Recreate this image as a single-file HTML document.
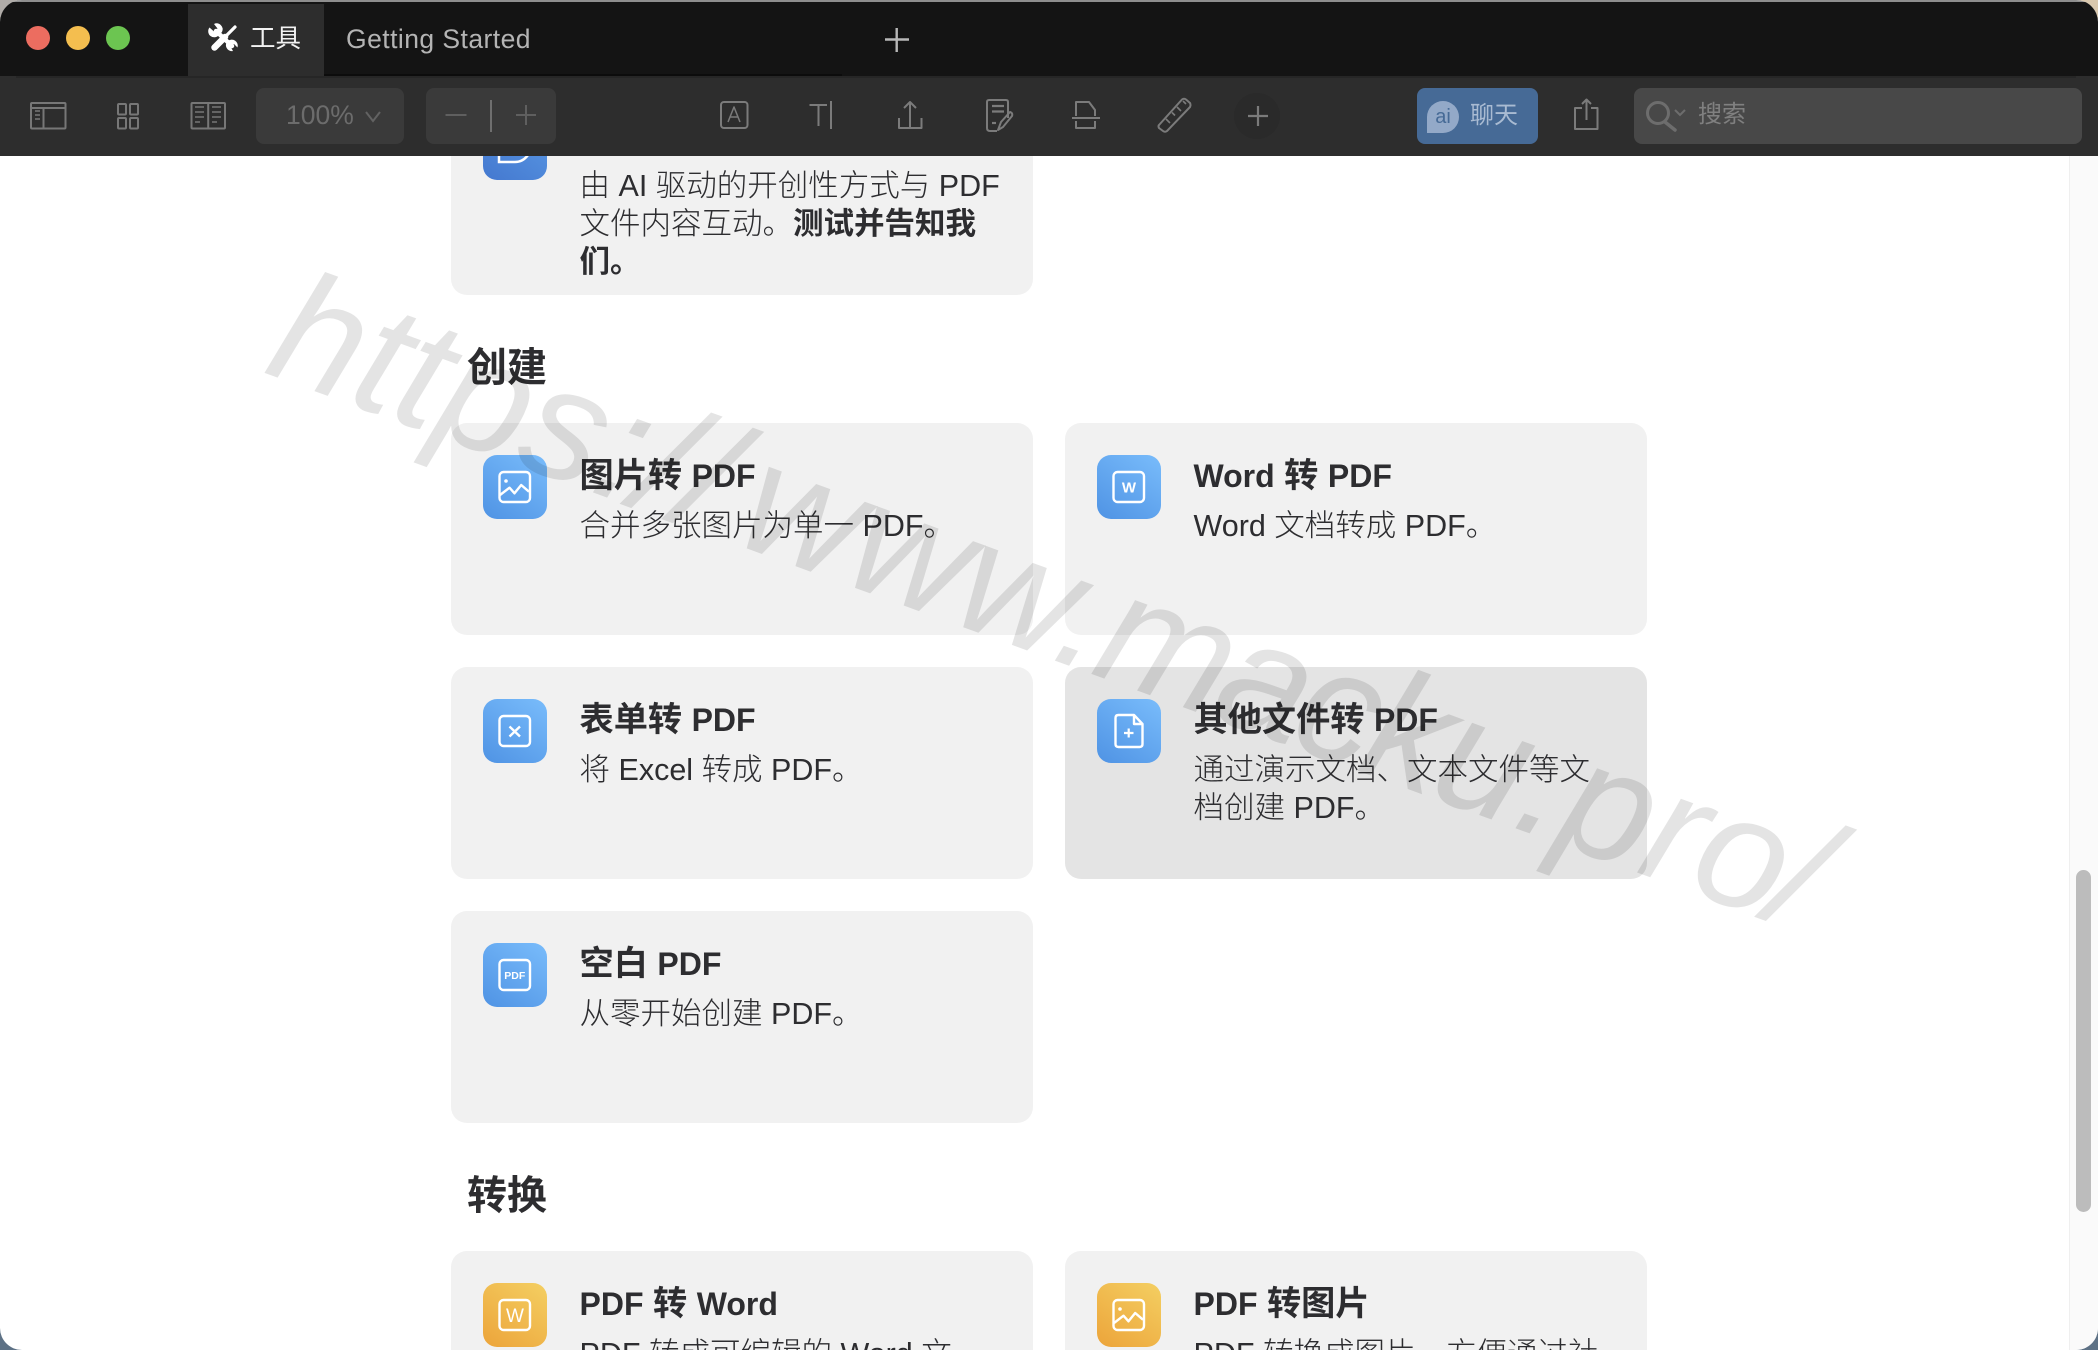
<!DOCTYPE html>
<html lang="zh"><head><meta charset="utf-8"><title>工具</title>
<style>
html,body{margin:0;padding:0;width:2098px;height:1350px;overflow:hidden;background:#8a8a8a}
body{position:relative;font-family:"Liberation Sans","Noto Sans CJK SC",sans-serif;color:#2d2d30}
.corner{position:absolute;width:30px;height:30px}
#win{position:absolute;left:0;top:0;width:2098px;height:1350px;border-radius:22px;overflow:hidden;background:#fff}
.abs{position:absolute}
.title{position:absolute;left:0;top:2px;width:2098px;height:74px;background:#141414}
.bar{position:absolute;left:0;top:76px;width:2098px;height:80px;background:#2d2d2d}
.btn{position:absolute;top:88px;height:56px;border-radius:8px}
.card{position:absolute;width:582px;height:212px;background:#f1f1f1;border-radius:16px;overflow:hidden}
.card.hv{background:#e4e4e4}
.ic{position:absolute;left:32px;top:32px;width:64px;height:64px;border-radius:14px;background:linear-gradient(35deg,#4f93e4,#79bcfb)}
.ic.o{background:linear-gradient(35deg,#eca43a,#f4cf62)}
.ic svg{position:absolute;left:0;top:0}
.t{position:absolute;left:128.5px;top:31.5px;font-size:34.2px;font-weight:700;line-height:42px;white-space:nowrap}
.t span{font-size:32px}
.d{position:absolute;left:128.5px;top:83.5px;width:425px;font-size:30.5px;font-weight:300;line-height:38.4px}
.d b{font-weight:700}
h2{position:absolute;left:467px;margin:0;font-size:40px;font-weight:700;line-height:50px}
</style></head><body>
<div class="corner" style="left:0;top:0;background:#b0aca8"></div>
<div class="corner" style="right:0;top:0;background:#d9c8ae"></div>
<div class="corner" style="left:0;bottom:0;background:#5d7185"></div>
<div class="corner" style="right:0;bottom:0;background:#5d7185"></div>
<div id="win">
<div class="abs" style="left:0;top:0;width:2098px;height:2px;background:#8e8e8e"></div>
<div class="title"></div>
<div class="abs" style="left:324px;top:74px;width:518px;height:2px;background:#0c0c0c"></div>
<div class="bar"></div>
<div class="abs" style="left:16px;top:76px;width:2060px;height:2px;background:#262626"></div>
<div class="abs" style="left:188px;top:4px;width:136px;height:72px;background:#2d2d2d"></div>

<div class="abs" style="left:26px;top:26px;width:24px;height:24px;border-radius:50%;background:#ec6d60"></div>
<div class="abs" style="left:66px;top:26px;width:24px;height:24px;border-radius:50%;background:#f4be4f"></div>
<div class="abs" style="left:106px;top:26px;width:24px;height:24px;border-radius:50%;background:#6cc551"></div>

<div class="abs" style="left:250px;top:20px;font-size:25.5px;line-height:38px;color:#f2f2f2;white-space:nowrap">工具</div>
<div class="abs" style="left:346px;top:20px;font-size:26.5px;letter-spacing:.45px;line-height:38px;color:#b4b4b4;white-space:nowrap">Getting Started</div>

<div class="btn" style="left:256px;width:148px;background:#3a3a3a"></div>
<div class="btn" style="left:426px;width:130px;background:#3a3a3a"></div>
<div class="abs" style="left:286px;top:96px;font-size:26.5px;line-height:38px;color:#6c6c6c;white-space:nowrap">100%</div>
<div class="abs" style="left:1234px;top:93px;width:46px;height:46px;border-radius:50%;background:#2a2a2a"></div>
<div class="btn" style="left:1417px;width:121px;background:#466a96"></div>
<div class="abs" style="left:1470px;top:97px;font-size:24px;line-height:38px;color:#a9bbd2;white-space:nowrap">聊天</div>
<div class="btn" style="left:1634px;width:448px;background:#484848"></div>
<div class="abs" style="left:1698px;top:96px;font-size:24px;line-height:38px;color:#808080;white-space:nowrap">搜索</div>

<svg class="abs" style="left:0;top:0" width="2098" height="156" viewBox="0 0 2098 156" fill="none">
<!-- tools -->
<g stroke="#fff" stroke-linecap="round">
<path d="M214.500 47.500L225 37" stroke-width="6.500"/><path d="M225 37L235 27" stroke-width="3.200"/>
<path d="M216 31L232 46" stroke-width="4.500"/>
</g>
<path d="M209.500 27.500A6 6 0 0 0 219 35L222 32A6 6 0 0 0 214 24L217.500 28.500L214 31.500Z" fill="#fff"/>
<path d="M237.500 47.500A6 6 0 0 0 228 41L226 44A6 6 0 0 0 233 51L230.500 46.500L234 44Z" fill="#fff"/>
<path d="M885 39.500H909M896.700 28V52" stroke="#b8b8b8" stroke-width="2.400"/>
<g stroke="#777" stroke-width="2">
<!-- sidebar -->
<rect x="31" y="103" width="34.500" height="25.500" rx="1"/><path d="M31 108H65.500M43.500 108V128.500"/>
<path d="M35 111H40M35 115H40M35 119H40" stroke-width="1.600"/>
<!-- grid -->
<rect x="118" y="104" width="8" height="10.500" rx="1"/><rect x="130" y="104" width="8" height="10.500" rx="1"/>
<rect x="118" y="118" width="8" height="10.500" rx="1"/><rect x="130" y="118" width="8" height="10.500" rx="1"/>
<!-- book -->
<rect x="191.500" y="103" width="33.500" height="25.500" rx="1"/><path d="M208.200 103V128.500"/>
<path d="M195 107H204M195 112H204M195 117H204M195 122H200M212 107H221M212 112H221M212 117H221M212 122H217" stroke-width="1.600"/>
<!-- chevron -->
<path d="M366 112L373 121L380 112" stroke="#626262"/>
</g>
<g stroke="#5f5f5f" stroke-width="2">
<path d="M445.500 115H466.500"/><path d="M516 115H536M526 105V125"/>
</g>
<path d="M491 100V132" stroke="#6f6f6f" stroke-width="2"/>
<g stroke="#7b7b7b" stroke-width="2" stroke-linejoin="round">
<!-- A box -->
<rect x="721" y="102" width="26.500" height="26" rx="3"/><path d="M728 122L734 107L740 122M730 117H738" stroke-width="1.500"/>
<!-- T| -->
<path d="M809.500 105H827M818.500 105V126M831 101V129"/>
<!-- upload -->
<path d="M899 118V128H921.500V118M910 128V102M904 108L910 102L916 108" />
<!-- doc sign -->
<path d="M1008 118V102Q1008 100 1006 100H989Q987 100 987 102V128Q987 131 990 131H997"/>
<path d="M992 106H1004M992 111.500H1004" stroke-width="2.200"/><path d="M992 123H996" stroke-width="2.200"/>
<path d="M998 130L1001 122L1010 112Q1013 113 1012 116L1003 127Z"/>
<!-- crop -->
<path d="M1076 116V102H1089L1095 110V116M1072 118H1100M1076 121V128H1095V121"/>
<!-- ruler -->
<path d="M1159 125L1182 99.500Q1184 98 1186 99.500L1190 103Q1191 105 1190 107L1167 131Q1165 132.500 1163 131L1159 128Q1158 126 1159 125Z"/>
<path d="M1166 119L1170 123M1172 112.500L1175 115.500M1177 107L1181 111M1183 101L1186 104" stroke-width="1.600"/>
<!-- plus -->
<path d="M1248 116H1268M1258 106V126" stroke-width="2.200"/>
<!-- share -->
<path d="M1582 108H1575V129H1597.500V108H1591M1586.500 120V100M1582 104L1586.500 99.500L1591 104"/>
</g>
<!-- ai bubble -->
<path d="M1427 133V117A16 16 0 1 1 1443 133Z" fill="#93a9c8"/>
<text x="1443" y="123" font-family="Liberation Sans" font-size="20" fill="#466a96" text-anchor="middle">ai</text>
<!-- search -->
<circle cx="1658" cy="113" r="10.500" stroke="#6d6d6d" stroke-width="3"/><path d="M1665 122L1675 130" stroke="#6d6d6d" stroke-width="3.500" stroke-linecap="round"/>
<path d="M1675 110L1680 115L1685 110" stroke="#6d6d6d" stroke-width="2"/>
</svg>

<!-- top partial card -->
<div class="abs" style="left:0;top:156px;width:2098px;height:1194px;overflow:hidden">
<div class="card" style="left:451px;top:-72px;height:211px">
<div class="ic" style="background:linear-gradient(35deg,#4478cf,#5b9be6)">
<svg width="64" height="64" fill="none"><path d="M16 38V46H32Q40 46 45 39" stroke="#fff" stroke-width="2.500"/></svg>
</div>
<div class="d" style="top:82.500px">由 AI 驱动的开创性方式与 PDF 文件内容互动。<b>测试并告知我们。</b></div>
</div>
</div>
<h2 style="top:343px">创建</h2>

<div class="card" style="left:451px;top:423px">
<div class="ic"><svg width="64" height="64" fill="none" stroke="#fff" stroke-width="2.400" stroke-linejoin="round"><rect x="16.500" y="17" width="30.500" height="30" rx="4"/><path d="M17 40L26.500 32.700L31.500 38.300L38.200 30L46 36.700"/><circle cx="23" cy="26" r="1.800" fill="#fff" stroke="none"/></svg></div>
<div class="t">图片转 <span>PDF</span></div><div class="d">合并多张图片为单一 PDF。</div></div>

<div class="card" style="left:1065px;top:423px">
<div class="ic"><svg width="64" height="64" fill="none" stroke="#fff" stroke-width="2.400"><rect x="16.500" y="17" width="30.500" height="30" rx="4"/><text x="32" y="37.500" font-family="Liberation Sans" font-size="15" font-weight="700" fill="#fff" stroke="none" text-anchor="middle">W</text></svg></div>
<div class="t"><span>Word</span> 转 <span>PDF</span></div><div class="d">Word 文档转成 PDF。</div></div>

<div class="card" style="left:451px;top:667px">
<div class="ic"><svg width="64" height="64" fill="none" stroke="#fff" stroke-width="2.400"><rect x="16.500" y="17" width="30.500" height="30" rx="4"/><path d="M26.500 27.500L37 37.500M37 27.500L26.500 37.500"/></svg></div>
<div class="t">表单转 <span>PDF</span></div><div class="d">将 Excel 转成 PDF。</div></div>

<div class="card hv" style="left:1065px;top:667px">
<div class="ic"><svg width="64" height="64" fill="none" stroke="#fff" stroke-width="2.400" stroke-linejoin="round"><path d="M37 16H21.500Q18.500 16 18.500 19V45Q18.500 48 21.500 48H42.500Q45.500 48 45.500 45V25Z"/><path d="M37 16V25H45.500"/><path d="M27 34H36.500M31.700 29.500V38.500" stroke-width="2.200"/></svg></div>
<div class="t">其他文件转 <span>PDF</span></div><div class="d">通过演示文档、文本文件等文档创建 PDF。</div></div>

<div class="card" style="left:451px;top:911px">
<div class="ic"><svg width="64" height="64" fill="none" stroke="#fff" stroke-width="2.400"><rect x="16.500" y="17" width="30.500" height="30" rx="4"/><text x="31.800" y="36" font-family="Liberation Sans" font-size="10.500" font-weight="700" fill="#fff" stroke="none" text-anchor="middle">PDF</text></svg></div>
<div class="t">空白 <span>PDF</span></div><div class="d">从零开始创建 PDF。</div></div>

<h2 style="top:1171px">转换</h2>

<div class="card" style="left:451px;top:1251px">
<div class="ic o"><svg width="64" height="64" fill="none" stroke="#fff" stroke-width="2.400"><rect x="16.500" y="17" width="30.500" height="30" rx="4"/><text x="32" y="39" font-family="Liberation Sans" font-size="19" fill="#fff" stroke="none" text-anchor="middle">W</text></svg></div>
<div class="t"><span>PDF</span> 转 <span>Word</span></div><div class="d">PDF 转成可编辑的 Word 文档。</div></div>

<div class="card" style="left:1065px;top:1251px">
<div class="ic o"><svg width="64" height="64" fill="none" stroke="#fff" stroke-width="2.400" stroke-linejoin="round"><rect x="16.500" y="17" width="30.500" height="30" rx="4"/><path d="M17 40L26.500 32.700L31.500 38.300L38.200 30L46 36.700"/><circle cx="23" cy="26" r="1.800" fill="#fff" stroke="none"/></svg></div>
<div class="t"><span>PDF</span> 转图片</div><div class="d">PDF 转换成图片，方便通过社交媒体分享。</div></div>

<!-- scrollbar -->
<div class="abs" style="left:2069px;top:156px;width:29px;height:1194px;background:#fafafa;border-left:1px solid #efefef;box-sizing:border-box"></div>
<div class="abs" style="left:2076px;top:870px;width:15px;height:342px;border-radius:8px;background:#bcbcbc"></div>

<!-- watermark -->
<svg class="abs" style="left:0;top:156px" width="2098" height="1194" viewBox="0 156 2098 1194">
<text transform="translate(262,372) rotate(20)" font-family="Liberation Sans" font-style="italic" font-size="159.500" fill="#000" fill-opacity="0.105">https://<tspan dx="22">www.</tspan><tspan dx="-2">m</tspan><tspan dx="-6">a</tspan><tspan dx="-6">c</tspan><tspan dx="-6">k</tspan><tspan dx="-4">u</tspan>.pro<tspan dx="-5">/</tspan></text>
</svg>
</div>
</body></html>
